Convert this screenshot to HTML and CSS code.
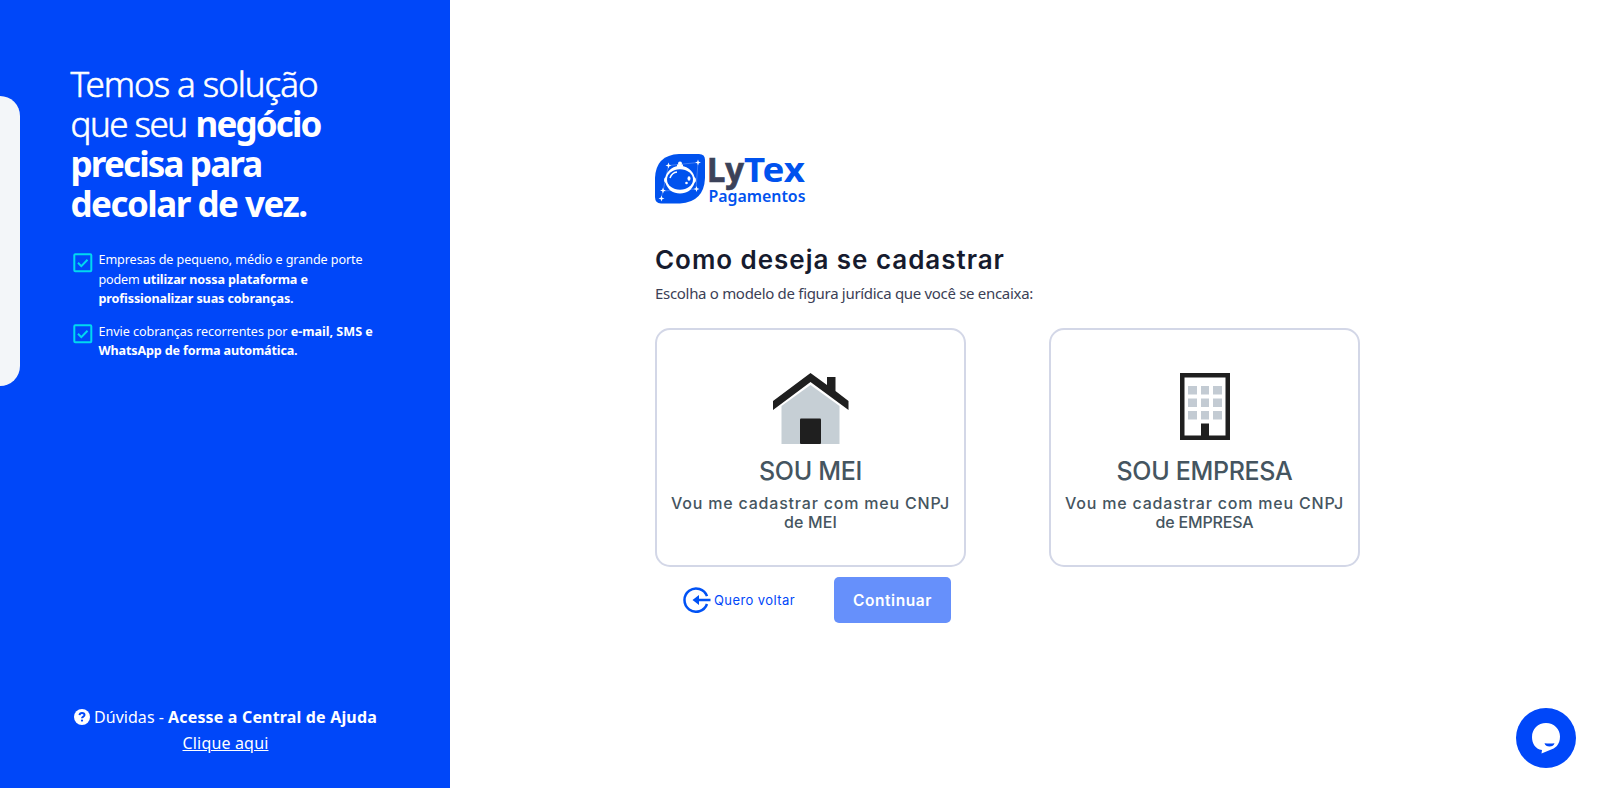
FILE: index.html
```html
<!DOCTYPE html>
<html lang="pt-BR">
<head>
<meta charset="utf-8">
<title>LyTex Pagamentos</title>
<link rel="stylesheet" href="styles.css">
</head>
<body>
<div class="page">
  <aside class="panel">
    <div class="tab"></div>
    <h2 class="headline">
      <span class="line"><span class="h-a">Temos a solução</span></span>
      <span class="line"><span class="h-b">que seu</span> <b class="h-c">negócio</b></span>
      <b class="line"><span class="h-d">precisa para</span></b>
      <b class="line"><span class="h-e">decolar de vez.</span></b>
    </h2>
    <ul class="features">
      <li class="feature">
        <svg class="check" viewBox="0 0 20 20"><rect x="1.3" y="1.3" width="17" height="17" rx="1" /><path d="M5 9.8l3.3 3.3 6.2-6.4"/></svg>
        <p><span class="line"><span class="f-a">Empresas de pequeno, médio e grande porte</span></span>
        <span class="line"><span class="f-b">podem</span> <b class="f-c">utilizar nossa plataforma e</b></span>
        <b class="line"><span class="f-c">profissionalizar suas cobranças.</span></b></p>
      </li>
      <li class="feature">
        <svg class="check" viewBox="0 0 20 20"><rect x="1.3" y="1.3" width="17" height="17" rx="1" /><path d="M5 9.8l3.3 3.3 6.2-6.4"/></svg>
        <p><span class="line"><span class="f-e">Envie cobranças recorrentes por</span> <b class="f-f">e-mail, SMS e</b></span>
        <b class="line"><span class="f-g">WhatsApp de forma automática.</span></b></p>
      </li>
    </ul>
    <footer class="help">
      <div class="help-line">
        <svg class="question" viewBox="0 0 16 16"><circle cx="8" cy="8" r="8"/><path d="M5.500 6.100C5.700 4.500 6.800 3.900 8 3.900c1.400 0 2.500.8 2.500 2C10.500 7.600 8 7.600 8 9.300"/><rect x="6.900" y="10.500" width="2.200" height="2.200" rx="1.100"/></svg>
        <span class="g-a">Dúvidas -</span> <b class="g-b">Acesse a Central de Ajuda</b>
      </div>
      <a class="help-link"><span class="g-b">Clique aqui</span></a>
    </footer>
  </aside>
  <main class="main">
    <svg class="logo" viewBox="0 0 152 54">
      <path class="mark" d="M24 0H44Q50 0 50 6V24Q49 48 25 49.500H6Q0 49 0 43V24Q1 1 24 0Z"/>
      <path class="orbit" d="M13.500 11.500L43 8.500L41 35L8 37L13.500 11.500M8 37L6 44.500"/>
      <path class="helmet" d="M25 12C35 12 39 20 39.500 23Q41 24 41 26T39.500 29C37 36 32 39.500 25 39.500S13 36 10.500 29Q9 28 9 26T10.500 23C11 20 15 12 25 12Z"/>
      <ellipse class="visor" cx="25" cy="25.500" rx="13" ry="10.300"/>
      <path class="shine" d="M15 24Q17 18.500 22 18"/>
      <circle class="star" cx="25" cy="9.500" r="2"/><rect class="star" x="22" y="10.500" width="6" height="3"/>
      <ellipse class="star" cx="34" cy="24.500" rx="1.500" ry="2.200"/><circle class="star" cx="31.500" cy="29" r="1.300"/>
      <path class="star" d="M13.500 8.500l.8 2.200 2.200.8-2.200.8-.8 2.200-.8-2.200-2.200-.8 2.200-.8zM43 5.500l.8 2.200 2.200.8-2.200.8-.8 2.200-.8-2.200-2.200-.8 2.200-.8zM41.500 32l.8 2.200 2.200.8-2.200.8-.8 2.200-.8-2.200-2.200-.8 2.200-.8zM8 33.500l.8 2.200 2.200.8-2.200.8-.8 2.200-.8-2.200-2.200-.8 2.200-.8zM6.500 41.500l.8 2.200 2.200.8-2.200.8-.8 2.200-.8-2.200-2.200-.8 2.200-.8z"/>
      <text class="brand brand-dark" x="52" y="28" textLength="37" lengthAdjust="spacingAndGlyphs">Ly</text>
      <text class="brand" x="89" y="28" textLength="61" lengthAdjust="spacingAndGlyphs">Tex</text>
      <text class="brand-sub" x="53.500" y="47.500" textLength="97" lengthAdjust="spacingAndGlyphs">Pagamentos</text>
    </svg>
    <h1 class="title">Como deseja se cadastrar</h1>
    <p class="subtitle">Escolha o modelo de figura jurídica que você se encaixa:</p>
    <div class="cards">
      <section class="card">
        <svg class="picture" viewBox="0 0 76 72">
          <path fill="#c6cfd5" d="M8.500 33L37.500 12L66.500 33V71H8.500Z"/>
          <path fill="#1f1f1f" d="M0 28L37.500 0L54 12V4H62.500V18L75.500 28V37L37.500 9L0 37Z"/>
          <rect fill="#1f1f1f" x="27" y="45.500" width="21" height="25.500" rx="1"/>
        </svg>
        <h3 class="card-title">SOU MEI</h3>
        <p class="card-text"><span class="c-b">Vou me cadastrar com meu CNPJ</span><br><span class="c-c">de MEI</span></p>
      </section>
      <section class="card">
        <svg class="picture" viewBox="0 0 76 72">
          <path fill="#1f1f1f" fill-rule="evenodd" d="M13 0H63V67H13ZM17.500 4.500V62.500H34V50.500H42V62.500H58.500V4.500Z"/>
          <path fill="#c3cbd3" d="M21 13h9v8.500h-9zM34 13h8v8.500h-8zM46 13h9v8.500h-9zM21 25.500h9v8.500h-9zM34 25.500h8v8.500h-8zM46 25.500h9v8.500h-9zM21 38h9v8.500h-9zM34 38h8v8.500h-8zM46 38h9v8.500h-9z"/>
        </svg>
        <h3 class="card-title">SOU EMPRESA</h3>
        <p class="card-text"><span class="c-b">Vou me cadastrar com meu CNPJ</span><br><span class="c-e">de EMPRESA</span></p>
      </section>
    </div>
    <div class="actions">
      <a class="back">
        <svg class="back-icon" viewBox="0 0 28 26"><path fill="none" stroke="#0052f5" stroke-width="2.500" d="M24 9.200A11.600 11.600 0 1 0 24 17"/><path fill="#0052f5" d="M9.500 13L16 8V11.800H27.500V14.200H16V18Z"/></svg>
        Quero voltar
      </a>
      <button class="continue">Continuar</button>
    </div>
  </main>
  <div class="chat">
    <svg viewBox="0 0 60 60"><path fill="#fff" d="M30 15C38 15 44 21 44 28.500C44 37 39 40.500 34 42L25.500 45.500L26 42C19 41 16 35 16 29C16 21 22 15 30 15Z"/><path fill="#0047f9" d="M28.500 35.200Q34 36 38.500 35.200Q37.500 38.500 33.500 38.500T28.500 35.200Z"/></svg>
  </div>
</div>
</body>
</html>
```
FILE: styles.css
```css
* { box-sizing: border-box; margin: 0; padding: 0; }
body { background: #fff; font-family: "Noto Sans", sans-serif; }
.page { display: flex; width: 100%; height: 788px; overflow: hidden; }

/* Promotional side panel */
.panel { position: relative; display: flex; flex-direction: column; width: 450px; padding: 64px 71px 0 70.500px; background: #0047f9; color: #fff; }
.tab { position: absolute; left: 0; top: 96px; width: 20px; height: 290px; border-radius: 0 20px 20px 0; background: #f3f6f9; }
.line { display: block; white-space: nowrap; }
.headline { font-size: 35px; line-height: 40px; font-weight: 300; -webkit-text-stroke: .6px #fff; }
.headline b { font-weight: 700; -webkit-text-stroke: 0; }
.h-a { letter-spacing: -1.061px; }
.h-b { letter-spacing: -1.549px; }
.h-c { letter-spacing: -1.864px; }
.h-d { letter-spacing: -1.844px; }
.h-e { letter-spacing: -1.522px; }
.features { display: flex; flex-direction: column; gap: 13px; margin-top: 26.400px; list-style: none; font-size: 12.600px; line-height: 19.500px; }
.feature { display: flex; gap: 5.500px; padding-left: 2.500px; }
.check { width: 20px; height: 20px; margin-top: 2.500px; fill: none; stroke: #00d9f0; stroke-width: 2; }
.f-a { letter-spacing: -.089px; }
.f-b { letter-spacing: -.2px; }
.f-c { letter-spacing: -.125px; }
.f-e { letter-spacing: -.055px; }
.f-f { letter-spacing: -.024px; }
.f-g { letter-spacing: -.156px; }
.help { width: 308px; margin: auto 0 32.500px 1px; font-size: 16px; line-height: 26px; text-align: center; }
.help-line { display: flex; align-items: center; gap: 4px; padding-left: 2.500px; white-space: nowrap; }
.question { flex: none; width: 16px; height: 16px; fill: #fff; }
.question path { fill: none; stroke: #0047f9; stroke-width: 2; }
.question rect { fill: #0047f9; }
.help-link { text-decoration: underline; }
.g-a { letter-spacing: .042px; }
.g-b { letter-spacing: .171px; }

/* Registration form */
.main { display: flex; flex-direction: column; padding: 154px 0 0 205px; }
.logo { width: 152px; height: 54px; overflow: visible; }
.mark { fill: #0052ee; }
.orbit { fill: none; stroke: #6f9bf7; stroke-width: .6; }
.helmet, .star { fill: #fff; }
.visor { fill: #0052ee; }
.shine { fill: none; stroke: #fff; stroke-width: 1.500; }
.brand { fill: #0052ee; font-size: 34px; font-weight: 700; }
.brand-dark { fill: #3b4259; stroke: #3b4259; stroke-width: .7; }
.brand-sub { fill: #0052ee; font-size: 15.500px; font-weight: 600; }
.title { margin-top: 36.500px; font: 600 26px/30px Inter, sans-serif; letter-spacing: .96px; color: #161b2e; white-space: nowrap; }
.subtitle { margin-top: 8.500px; font-size: 15px; line-height: 20px; letter-spacing: -.308px; color: #3b4056; }
.cards { display: flex; gap: 83px; margin-top: 25px; }
.card { display: flex; flex-direction: column; align-items: center; width: 311px; height: 239px; padding-top: 42.500px; border: 2px solid #d3d7e7; border-radius: 15px; color: #455560; text-align: center; font-family: Inter, sans-serif; }
.picture { width: 76px; height: 72px; }
.card-title { margin-top: 11.500px; font-size: 25px; line-height: 30px; font-weight: 500; letter-spacing: -.315px; }
.card-text { margin-top: 8px; font-size: 16px; line-height: 19.200px; font-weight: 500; white-space: nowrap; }
.c-b { letter-spacing: .803px; }
.c-c { letter-spacing: .138px; }
.c-e { letter-spacing: -.169px; }
.actions { display: flex; align-items: center; height: 46px; margin-top: 10px; padding-left: 28px; font-family: Inter, sans-serif; }
.back { display: flex; align-items: center; gap: 3px; color: #0047f9; font-size: 13px; letter-spacing: .413px; white-space: nowrap; }
.back-icon { width: 28px; height: 26px; }
.continue { width: 117px; height: 46px; margin-left: 39px; border: 0; border-radius: 5px; background: #6690fb; color: #fff; font: 600 15.500px Inter, sans-serif; letter-spacing: .566px; }

/* Floating chat launcher */
.chat { position: absolute; left: 1516px; top: 708px; width: 60px; height: 60px; border-radius: 50%; background: #0047f9; }
```
